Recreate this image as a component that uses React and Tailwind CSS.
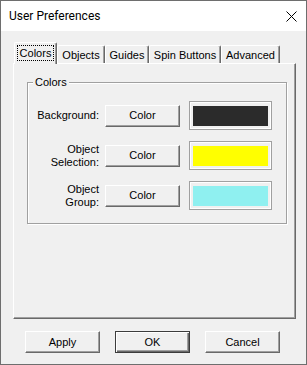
import React from "react";

const font = { fontFamily: '"Liberation Sans", Arial, sans-serif' };

function Btn({ children, def }) {
  return (
    <div
      className={
        "w-[75px] h-[22px] flex items-center justify-center text-[11px] text-black bg-[#f0f0f0] shrink-0 " +
        (def
          ? "border border-[#3c3c3c] shadow-[inset_1px_1px_0_#fff,inset_-1px_-1px_0_#696969,inset_-2px_-2px_0_#a0a0a0]"
          : "border border-t-white border-l-white border-r-[#696969] border-b-[#696969] shadow-[inset_-1px_-1px_0_#a0a0a0]")
      }
    >
      {children}
    </div>
  );
}

function Tab({ label, w, selected }) {
  return (
    <div
      className={
        "flex items-center justify-center text-[11px] text-black bg-[#f0f0f0] border-t border-l border-r border-t-white border-l-white border-r-[#696969] rounded-tl-[2px] rounded-tr-[2px] shadow-[inset_-1px_0_0_#a0a0a0] " +
        (selected ? "h-[22px] mb-[-1px] relative z-10 pb-[2px]" : "h-[18px]")
      }
      style={{ width: w }}
    >
      {selected ? (
        <span className="border border-dotted border-black px-[2px] leading-[14px]">{label}</span>
      ) : (
        <span className="leading-[14px]">{label}</span>
      )}
    </div>
  );
}

function Row({ label, color }) {
  return (
    <div className="flex items-center h-[29px]">
      <div className="w-[71px] text-right text-[11px] leading-[13px] text-black">{label}</div>
      <div className="ml-[6px]">
        <Btn>Color</Btn>
      </div>
      <div className="ml-[9px] w-[83px] h-[29px] border border-[#a0a0a0] shadow-[inset_1px_1px_0_#fff,inset_-1px_-1px_0_#fff] bg-[#f0f0f0] pt-[4px] pl-[3px]">
        <div className="w-[75px] h-[20px]" style={{ background: color }} />
      </div>
    </div>
  );
}

export default function App() {
  return (
    <div
      className="w-[307px] h-[365px] border border-[#6e6e6e] flex flex-col bg-[#f0f0f0] overflow-hidden"
      style={font}
    >
      <div className="h-[30px] bg-white flex items-center justify-between pl-[8px] pr-[9px] shrink-0">
        <span className="text-[12px] text-black font-['Roboto',sans-serif]">User Preferences</span>
        <svg width="11" height="11" viewBox="0 0 11 11">
          <path d="M0.5 0.5 L10.5 10.5 M10.5 0.5 L0.5 10.5" stroke="#000" strokeWidth="1" />
        </svg>
      </div>
      <div className="flex-1 pl-[12px] pt-[11px]">
        <div className="flex items-end pl-[1px]">
          <Tab label="Colors" w={43} selected />
          <Tab label="Objects" w={48} />
          <Tab label="Guides" w={44} />
          <Tab label="Spin Buttons" w={72} />
          <Tab label="Advanced" w={59} />
        </div>
        <div className="w-[283px] h-[256px] border border-t-white border-l-white border-r-[#696969] border-b-[#696969] shadow-[inset_-1px_-1px_0_#a0a0a0] pt-[12px] pl-[13px]">
          <fieldset className="w-[260px] border border-[#a0a0a0] shadow-[inset_1px_1px_0_#fff,1px_1px_0_#fff] pb-[13px]">
            <legend className="ml-[5px] px-[2px] text-[11px] leading-[13px] text-black bg-[#f0f0f0]">Colors</legend>
            <div className="flex flex-col gap-[11px] pt-[12px]">
              <Row label="Background:" color="#2b2b2b" />
              <Row label={<>Object<br />Selection:</>} color="#ffff00" />
              <Row label={<>Object<br />Group:</>} color="#8ff0f0" />
            </div>
          </fieldset>
        </div>
        <div className="flex gap-[15px] mt-[12px] ml-[12px]">
          <Btn>Apply</Btn>
          <Btn def>OK</Btn>
          <Btn>Cancel</Btn>
        </div>
      </div>
    </div>
  );
}
